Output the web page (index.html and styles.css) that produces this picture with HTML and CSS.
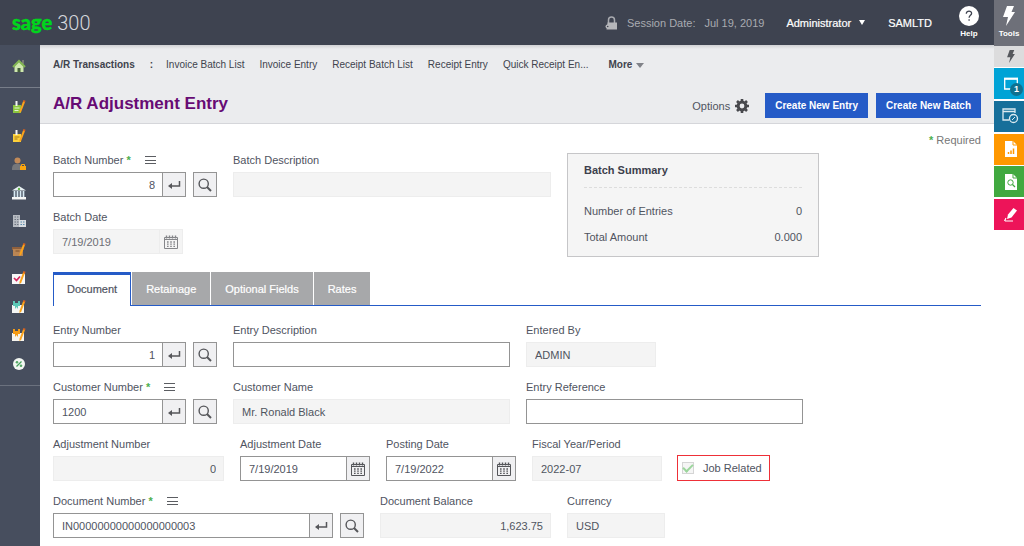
FILE: index.html
```html
<!DOCTYPE html>
<html lang="en">
<head>
<meta charset="utf-8">
<title>A/R Adjustment Entry - Sage 300</title>
<link rel="stylesheet" href="styles.css">
</head>
<body>
<svg class="defs" aria-hidden="true">
  <symbol id="i-enter" viewBox="0 0 14 12"><path d="M12.5 2v5H3" fill="none" stroke="#55565a" stroke-width="1.5"/><path d="M1 7l4-3v6z" fill="#55565a"/></symbol>
  <symbol id="i-search" viewBox="0 0 14 14"><circle cx="5.7" cy="5.7" r="4.6" fill="none" stroke="#55565a" stroke-width="1.4"/><path d="M9 9l4 4" stroke="#55565a" stroke-width="2"/></symbol>
  <symbol id="i-cal" viewBox="0 0 14 14"><path d="M.5 2.5h13v11H.5zM.5 4.500h13" fill="none" stroke="currentColor"/><path d="M2.500 .5v3M5.500 .5v3M8.500 .5v3M11.500 .5v3" stroke="currentColor" stroke-width="1.400"/><path d="M3 7h8.500M3 9.200h8.500M3 11.400h8.500" stroke="currentColor" stroke-width="1.300" stroke-dasharray="1.600 1.600"/></symbol>
  <symbol id="i-bolt" viewBox="0 0 12 20"><path d="M4 0h7L8.500 6H12L3 20l2-9H0z" fill="currentColor"/></symbol>
  <symbol id="i-pencil" viewBox="0 0 14 14"><path d="M11.300 .8l1.900.7L9.300 11.500 7.500 13.200V10.800z" fill="#fba41c"/><path d="M11.500 0l2 .8-.6 1.600-2-.8z" fill="#d9601e"/></symbol>
</svg>
<header class="topbar">
  <div class="brand"><span class="brand-sage">sage</span> <span class="brand-num">300</span></div>
  <div class="session">
    <svg width="13" height="14" viewBox="0 0 13 14"><path d="M3.500 7V4a3 3 0 0 1 6 0v3" fill="none" stroke="#a9abb0" stroke-width="1.500"/><path d="M2.500 6.500H12V13.500H1.500z" fill="#b5b6ba"/><circle cx="2.500" cy="10.500" r="2" fill="#b5b6ba"/><circle cx="2.700" cy="10.500" r=".8" fill="#3e4350"/></svg>
    <span>Session Date:</span><span class="date">Jul 19, 2019</span>
  </div>
  <button class="user" type="button">Administrator <i class="caret"></i></button>
  <span class="company">SAMLTD</span>
  <a class="help" href="#"><svg width="20" height="20" viewBox="0 0 20 20"><circle cx="10" cy="10" r="10" fill="#fff"/><path d="M7.300 7.800c0-3.800 5.500-3.400 5.300-.4-.1 1.900-2.500 2-2.500 4.300M10.100 13.200v1.600" fill="none" stroke="#3e4350" stroke-width="1.300"/></svg><span>Help</span></a>
</header>
<nav class="side" aria-label="Modules">
  <a class="home" href="#" aria-label="Home"><svg width="14" height="14" viewBox="0 0 14 14"><path d="M10 1h2v4h-2z" fill="#777"/><path d="M2.500 7L7 2.500 11.500 7v6h-9z" fill="#cfe8ae"/><path d="M1 8l6-6 6 6" fill="none" stroke="#83b653" stroke-width="2"/><path d="M5.500 9h3v4.200h-3z" fill="#45603b"/></svg></a>
  <ul class="modules">
    <li><a href="#" aria-label="Invoices"><svg width="14" height="14" viewBox="0 0 14 14"><path d="M1 5h8v8H1z" fill="#8bc63f"/><path d="M3.500 1h2v5h-2z" fill="#f4f4f4"/><path d="M2.500 8h5M2.500 10.500h4" stroke="#e6f4d0"/><use href="#i-pencil"/></svg></a></li>
    <li><a href="#" aria-label="Receipts"><svg width="14" height="14" viewBox="0 0 14 14"><path d="M1 5h8v8H1z" fill="#fdd13b"/><path d="M3.500 1h2v5h-2z" fill="#f4f4f4"/><path d="M2.500 8h5M2.500 10h3" stroke="#a87a16"/><use href="#i-pencil"/></svg></a></li>
    <li><a href="#" aria-label="Customers"><svg width="14" height="14" viewBox="0 0 14 14"><circle cx="5.500" cy="3.500" r="3" fill="#c28a58"/><path d="M0 13c0-7 3-6 6-6s4 1 4 6z" fill="#76777b"/><path d="M8 9h6v4H8z" fill="#fba60f"/><path d="M9.500 9V7.500h3V9" fill="none" stroke="#fba60f"/></svg></a></li>
    <li><a href="#" aria-label="Bank"><svg width="14" height="14" viewBox="0 0 14 14"><path d="M0 4.500L7 0l7 4.500z" fill="#e9f1f5"/><circle cx="7" cy="3" r="1.200" fill="#64b34c"/><path d="M2.500 5v6M5.500 5v6M8.500 5v6M11.500 5v6" stroke="#d8eaf4" stroke-width="1.700"/><path d="M0 11h14v2.500H0z" fill="#f5f5f5"/></svg></a></li>
    <li><a href="#" aria-label="Company"><svg width="14" height="14" viewBox="0 0 14 14"><path d="M1 1h7v12H1z" fill="#b7bbc2"/><path d="M7 6h7v7H7z" fill="#d8dce1"/><path d="M2.500 3h4M2.500 5.500h4M2.500 8h4M2.500 10.500h4" stroke="#6d7481" stroke-dasharray="1.500 1"/><path d="M8.500 8h4M8.500 10.500h4" stroke="#598cad" stroke-dasharray="1.500 1"/></svg></a></li>
    <li><a href="#" aria-label="Inventory"><svg width="14" height="14" viewBox="0 0 14 14"><path d="M0 4h12v3H0z" fill="#8f603d"/><path d="M1 6h10v7H1z" fill="#b98554"/><path d="M3.500 8h4" stroke="#79502f"/><use href="#i-pencil"/></svg></a></li>
    <li><a href="#" aria-label="Checks"><svg width="14" height="14" viewBox="0 0 14 14"><path d="M0 3h13v10H0z" fill="#f7f7f7"/><path d="M2 7l2.500 2.500L8 5.500" fill="none" stroke="#d4265d" stroke-width="1.700"/><use href="#i-pencil"/></svg></a></li>
    <li><a href="#" aria-label="Deposits"><svg width="14" height="14" viewBox="0 0 14 14"><path d="M0 5h12v8H0z" fill="#f4f6f4"/><path d="M1 1h2v2h3V1h2v5H6v3L4.500 7 3 9V6H1z" fill="#5cc9b7"/><use href="#i-pencil"/></svg></a></li>
    <li><a href="#" aria-label="Payments"><svg width="14" height="14" viewBox="0 0 14 14"><path d="M0 5h12v8H0z" fill="#f6f4ef"/><path d="M1 1h2v2h3V1h2v5H6v3L4.500 7 3 9V6H1z" fill="#f59b15"/><use href="#i-pencil"/></svg></a></li>
    <li><a href="#" aria-label="Tax"><svg width="14" height="14" viewBox="0 0 14 14"><circle cx="7" cy="7" r="6" fill="#f3f7f2"/><path d="M4.500 9.500l5-5" stroke="#44a05a" stroke-width="1.300"/><circle cx="5" cy="5.200" r="1.300" fill="#57a967"/><circle cx="9" cy="8.800" r="1.300" fill="#57a967"/></svg></a></li>
  </ul>
</nav>
<main class="page">
  <div class="heading">
    <nav class="crumbs"><strong>A/R Transactions</strong><strong class="colon">:</strong><a href="#">Invoice Batch List</a><a href="#">Invoice Entry</a><a href="#">Receipt Batch List</a><a href="#">Receipt Entry</a><a href="#">Quick Receipt En...</a><button class="more" type="button">More <i class="caret"></i></button></nav>
    <div class="titlebar">
      <h1>A/R Adjustment Entry</h1>
      <button class="options" type="button">Options <svg width="14" height="14" viewBox="0 0 14 14"><circle cx="7" cy="7" r="3.900" fill="none" stroke="#47484c" stroke-width="3"/><path d="M7 0v2M7 12v2M0 7h2M12 7h2M2 2l1.500 1.500M10.500 10.500L12 12M2 12l1.500-1.500M10.500 3.500L12 2" stroke="#47484c" stroke-width="2.600"/></svg></button>
      <button class="primary" type="button">Create New Entry</button>
      <button class="primary" type="button">Create New Batch</button>
    </div>
  </div>
  <form class="form">
    <p class="required"><b>*</b> Required</p>
    <section class="batch">
      <div class="rows">
        <div class="row">
          <div class="field w-find"><div class="label"><label for="bn">Batch Number <b>*</b></label><button class="menu" type="button" aria-label="Batch menu"></button></div>
            <div class="controls"><div class="group"><input class="num" id="bn" value="8"><button type="button" aria-label="Go"><svg width="14" height="12"><use href="#i-enter"/></svg></button></div><button class="finder" type="button" aria-label="Find batch"><svg width="14" height="14"><use href="#i-search"/></svg></button></div></div>
          <div class="field w-desc"><div class="label"><label for="bd">Batch Description</label></div><input class="ro" id="bd" readonly></div>
        </div>
        <div class="row">
          <div class="field w-date"><div class="label"><label for="bdt">Batch Date</label></div><div class="group off"><input id="bdt" value="7/19/2019" readonly><button type="button" aria-label="Calendar" disabled><svg width="14" height="14"><use href="#i-cal"/></svg></button></div></div>
        </div>
      </div>
      <aside class="summary">
        <h2>Batch Summary</h2>
        <dl><dt>Number of Entries</dt><dd>0</dd><dt>Total Amount</dt><dd>0.000</dd></dl>
      </aside>
    </section>
    <div class="tabs" role="tablist"><button class="tab active" type="button" role="tab" aria-selected="true">Document</button><button class="tab" type="button" role="tab">Retainage</button><button class="tab" type="button" role="tab">Optional Fields</button><button class="tab" type="button" role="tab">Rates</button></div>
    <section class="rows document">
      <div class="row">
        <div class="field w-find"><div class="label"><label for="en">Entry Number</label></div>
          <div class="controls"><div class="group"><input class="num" id="en" value="1"><button type="button" aria-label="Go"><svg width="14" height="12"><use href="#i-enter"/></svg></button></div><button class="finder" type="button" aria-label="Find entry"><svg width="14" height="14"><use href="#i-search"/></svg></button></div></div>
        <div class="field w-text"><div class="label"><label for="ed">Entry Description</label></div><input id="ed"></div>
        <div class="field w-date"><div class="label"><label for="eb">Entered By</label></div><input class="ro" id="eb" value="ADMIN" readonly></div>
      </div>
      <div class="row">
        <div class="field w-find"><div class="label"><label for="cn">Customer Number <b>*</b></label><button class="menu" type="button" aria-label="Customer menu"></button></div>
          <div class="controls"><div class="group"><input id="cn" value="1200"><button type="button" aria-label="Go"><svg width="14" height="12"><use href="#i-enter"/></svg></button></div><button class="finder" type="button" aria-label="Find customer"><svg width="14" height="14"><use href="#i-search"/></svg></button></div></div>
        <div class="field w-text"><div class="label"><label for="cname">Customer Name</label></div><input class="ro" id="cname" value="Mr. Ronald Black" readonly></div>
        <div class="field w-text"><div class="label"><label for="er">Entry Reference</label></div><input id="er"></div>
      </div>
      <div class="row">
        <div class="field w-amount"><div class="label"><label for="an">Adjustment Number</label></div><input class="ro num" id="an" value="0" readonly></div>
        <div class="field w-date"><div class="label"><label for="ad">Adjustment Date</label></div><div class="group"><input id="ad" value="7/19/2019"><button type="button" aria-label="Calendar"><svg width="14" height="14"><use href="#i-cal"/></svg></button></div></div>
        <div class="field w-date"><div class="label"><label for="pd">Posting Date</label></div><div class="group"><input id="pd" value="7/19/2022"><button type="button" aria-label="Calendar"><svg width="14" height="14"><use href="#i-cal"/></svg></button></div></div>
        <div class="field w-date"><div class="label"><label for="fy">Fiscal Year/Period</label></div><input class="ro" id="fy" value="2022-07" readonly></div>
        <label class="job"><input type="checkbox" checked disabled>Job Related</label>
      </div>
      <div class="row">
        <div class="field w-doc"><div class="label"><label for="dn">Document Number <b>*</b></label><button class="menu" type="button" aria-label="Document menu"></button></div>
          <div class="controls"><div class="group"><input id="dn" value="IN00000000000000000003"><button type="button" aria-label="Go"><svg width="14" height="12"><use href="#i-enter"/></svg></button></div><button class="finder" type="button" aria-label="Find document"><svg width="14" height="14"><use href="#i-search"/></svg></button></div></div>
        <div class="field w-amount"><div class="label"><label for="db">Document Balance</label></div><input class="ro num" id="db" value="1,623.75" readonly></div>
        <div class="field w-cur"><div class="label"><label for="cur">Currency</label></div><input class="ro" id="cur" value="USD" readonly></div>
      </div>
    </section>
  </form>
</main>
<aside class="tools">
  <a class="tools-head" href="#"><svg width="12" height="20"><use href="#i-bolt"/></svg><span>Tools</span></a>
  <a class="tools-sub" href="#" aria-label="Quick tools"><svg width="8" height="13" viewBox="0 0 12 20"><use href="#i-bolt" width="12" height="20"/></svg></a>
  <div class="tiles">
    <a class="tile windows" href="#" aria-label="Windows"><svg width="14" height="13" viewBox="0 0 14 13"><path d="M.7 1.500h12.600v10.500H.7z" fill="none" stroke="#fff" stroke-width="1.300"/><path d="M0 1.800h14" stroke="#fff" stroke-width="2"/></svg><span class="badge">1</span></a>
    <a class="tile recent" href="#" aria-label="Recent"><svg width="17" height="16" viewBox="0 0 17 16"><path d="M7 12H1V1h12v4M1 3.500h12" fill="none" stroke="#dceaf0" stroke-width="1.300"/><circle cx="11.500" cy="10.500" r="4" fill="none" stroke="#dceaf0" stroke-width="1.300"/><path d="M10 12l3-3" stroke="#dceaf0"/></svg></a>
    <a class="tile reports" href="#" aria-label="Reports"><svg width="12" height="16" viewBox="0 0 12 16"><path d="M0 0h8l4 4v12H0z" fill="#fff"/><path d="M8 0v4h4" fill="none" stroke="#ff9800"/><path d="M3.500 13v-2M6 13V9.500M8.500 13V7.500" stroke="#ff9800" stroke-width="1.500"/></svg></a>
    <a class="tile inquiry" href="#" aria-label="Inquiry"><svg width="12" height="16" viewBox="0 0 12 16"><path d="M0 0h8l4 4v12H0z" fill="#fff"/><path d="M8 0v4h4" fill="none" stroke="#41a940"/><circle cx="5.500" cy="8.500" r="2.700" fill="none" stroke="#41a940"/><path d="M7.500 10.500l2.500 2.500" stroke="#41a940" stroke-width="1.300"/></svg></a>
    <a class="tile edit" href="#" aria-label="Edit"><svg width="14" height="14" viewBox="0 0 14 14"><path d="M9.500 0L13 2.500 7.500 9.500 3 11l1-4.500z" fill="#fff"/><path d="M1 13h8M2 10l-1.500 3" stroke="#fff" stroke-width="1.200"/></svg></a>
  </div>
</aside>
</body>
</html>
```
FILE: styles.css
```css
* { box-sizing: border-box; }
body {
  margin: 0;
  min-height: 100vh;
  display: grid;
  grid-template-columns: 40px 1fr 30px;
  grid-template-rows: 45px 1fr;
  overflow: hidden;
  font: 11px/16px "Liberation Sans", Arial, sans-serif;
  color: #50545f;
  background: #fff;
}
button, input { font: inherit; color: inherit; margin: 0; min-width: 0; }
button { padding: 0; border: 0; background: none; }
a { color: inherit; text-decoration: none; }
svg { display: block; }
.defs { position: absolute; width: 0; height: 0; }
.caret { display: inline-block; border: 3px solid transparent; border-top: 5px solid currentColor; border-bottom: 0; }

.topbar { grid-column: 1 / 3; display: flex; align-items: center; padding: 0 15px 0 12px; background: #3e4350; color: #fff; }
.brand { display: flex; gap: 5px; align-items: baseline; margin-right: auto; line-height: 24px; }
.brand-sage { font: 900 20px/24px Lato, sans-serif; color: #00d61c; -webkit-text-stroke: 0.4px; }
.brand-num { font: 300 20px/24px Roboto, sans-serif; color: #d5d7dc; }
.session { display: flex; align-items: center; gap: 9px; color: #a9abb1; }
.user { display: flex; align-items: center; gap: 8px; margin: 0 23px 0 22px; -webkit-text-stroke: 0.2px; }
.company { margin-right: 27px; -webkit-text-stroke: 0.2px; }
.help { display: flex; flex-direction: column; align-items: center; gap: 3px; }
.help span, .tools-head span { font: bold 8px/10px "Liberation Sans", sans-serif; }

.side { grid-row: 2; background: #474e5e; }
.home { display: flex; align-items: center; justify-content: center; height: 43px; padding-right: 2px; border-bottom: 1px solid #777d89; }
.modules { list-style: none; display: flex; flex-direction: column; justify-content: space-between; height: 298px; margin: 0; padding: 5px 0 7px; border-bottom: 1px solid #6b717e; }
.modules a { display: flex; align-items: center; justify-content: center; height: 28px; padding-right: 2px; }

.heading { padding: 12px 13px 0; height: 79px; background: linear-gradient(#d0d1d4, #ebecee 4px); border-bottom: 1px solid #d5d6da; }
.crumbs { display: flex; gap: 15px; font-size: 10px; line-height: 16px; color: #40434d; }
.crumbs .colon { margin-right: -2px; }
.more { display: flex; align-items: center; gap: 4px; margin-left: 5px; font-weight: bold; }
.more .caret { border-width: 5px 4px 0; border-top-color: #808288; }
.titlebar { display: flex; align-items: center; gap: 8px; margin-top: 20px; }
h1 { margin: 0 auto 4px 0; font-size: 17px; line-height: 20px; color: #670b74; }
.options { display: flex; align-items: center; gap: 5px; margin-right: 8px; }
.primary { height: 25px; padding: 0 10px; background: #255bc7; color: #fff; font-size: 10px; font-weight: bold; }

.form { padding: 8px 13px 8px; }
.form b { color: #4caf50; }
.required { margin: 0 0 4px; text-align: right; color: #777; }
.batch { display: flex; gap: 16px; }
.rows { display: flex; flex-direction: column; gap: 12px; }
.row { display: flex; gap: 16px; }
.field { display: flex; flex-direction: column; gap: 4px; }
.w-find { width: 164px; }
.w-desc { width: 318px; }
.w-text { width: 277px; }
.w-date { width: 130px; }
.w-amount { width: 171px; }
.w-doc { width: 311px; }
.w-cur { width: 98px; }
.label { display: flex; align-items: center; gap: 14px; white-space: nowrap; height: 16px; }
.menu { width: 11px; height: 8px; background: linear-gradient(#5b5d62 0 1px, transparent 1px 4px, #5b5d62 4px 5px, transparent 5px 7px, #5b5d62 7px 8px); }
.field input { width: 100%; height: 25px; padding: 0 8px; border: 1px solid #949494; border-radius: 0; background: #fff; outline: 0; }
.field .num { text-align: right; padding-right: 7px; }
.field .ro { background: #f4f4f4; border-color: #ededed; }
.controls { display: flex; gap: 7px; }
.group { display: flex; flex: 1; }
.field .group input { flex: 1; border-right: 0; }
.group button, .finder { flex: none; display: flex; align-items: center; justify-content: center; width: 24px; height: 25px; border: 1px solid #949494; background: #f0f0f2; color: #55565a; }
.group.off input, .group.off button { background: #f4f4f4; border-color: #ededed; color: #6d6f75; }
.group.off button { color: #85868a; }

.summary { flex: 0 1 252px; height: 104px; margin-top: 1px; padding: 8px 16px; background: #f5f5f5; border: 1px solid #c6c6c8; }
.summary h2 { margin: 0; padding-bottom: 9px; border-bottom: 1px dashed #ddd; font-size: 11px; line-height: 16px; color: #3c404c; }
.summary dl { display: grid; grid-template-columns: 1fr auto; row-gap: 10px; margin: 15px 0 0; }
.summary dd { margin: 0; text-align: right; }

.tabs { display: flex; gap: 1px; height: 34px; margin: 15px 0 16px; background: linear-gradient(#255bc7, #255bc7) bottom / 100% 1px no-repeat; }
.tab { height: 33px; padding: 0 14px; background: #a7a8aa; color: #fff; -webkit-text-stroke: 0.2px; }
.tab.active { height: 34px; border: 1px solid #255bc7; border-width: 3px 1px 0; padding: 0 13px 3px; background: #fff; color: #50545f; }

.job { display: flex; align-items: center; gap: 9px; align-self: flex-end; height: 26px; padding: 0 7px 0 4px; margin-left: -1px; border: 1px solid #ee3038; }
.job input { appearance: none; width: 12px; height: 12px; margin: 0; border: 1px solid #d5d5d5; background: #f5f5f5; display: grid; place-items: center; }
.job input:checked::before { content: ""; width: 4px; height: 8px; margin-top: -2px; border: solid #9bd59c; border-width: 0 2px 2px 0; transform: rotate(45deg); }

.tools { grid-column: 3; grid-row: 1 / 3; }
.tools-head { display: flex; flex-direction: column; align-items: center; gap: 3px; height: 46px; padding-top: 6px; background: #6e7079; color: #fff; }
.tools-sub { display: flex; align-items: center; justify-content: center; height: 21px; margin-bottom: 1px; padding-left: 4px; background: #dcdcdd; color: #55575c; }
.tiles { display: flex; flex-direction: column; justify-content: space-between; height: 162px; }
.tile { position: relative; display: flex; align-items: center; justify-content: center; height: 31px; padding-left: 3px; }
.windows { background: #00a3d6; }
.recent { background: #166f9a; }
.reports { background: #ff9800; }
.inquiry { background: #41a940; }
.edit { background: #ed1459; }
.badge { position: absolute; right: 1px; bottom: 3px; width: 13px; height: 13px; border-radius: 50%; background: #0e718f; color: #fff; font: bold 9px/13px "Liberation Sans", sans-serif; text-align: center; }
```
